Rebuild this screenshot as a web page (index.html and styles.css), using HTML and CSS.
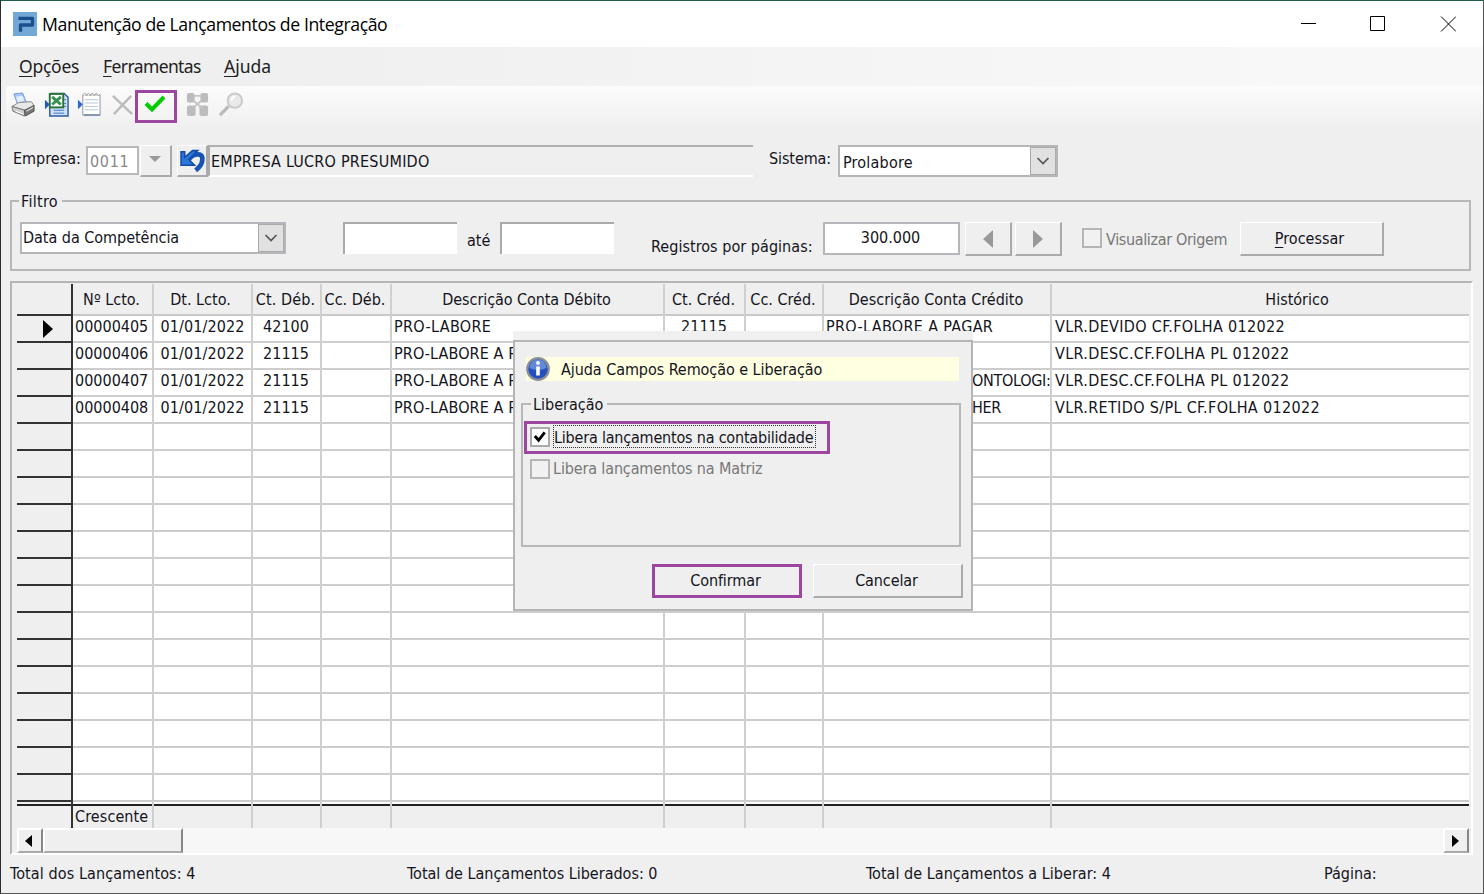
FILE: index.html
```html
<!DOCTYPE html>
<html lang="pt-BR">
<head>
<meta charset="utf-8">
<title>Manutenção de Lançamentos de Integração</title>
<link rel="stylesheet" href="styles.css">
</head>
<body>
<div class="window">
  <header class="titlebar">
    <svg class="logo" viewBox="0 0 24 24"><rect width="24" height="24" fill="#72a8d6"/><path d="M5.500 6.300H19.500v6.700H7.500V19.700" fill="none" stroke="#17508c" stroke-width="3.300" stroke-linejoin="round"/></svg>
    <h1 class="title">Manutenção de Lançamentos de Integração</h1>
    <svg class="controls" viewBox="0 0 156 16" fill="none" stroke="#000"><path d="M1 7.500h15M70.500 .5h14v14h-14z"/><path d="M141 .5l15 15M156 .5l-15 15"/></svg>
  </header>
  <nav class="menu"><span class="m1"><u>O</u>pções</span><span class="m2"><u>F</u>erramentas</span><span class="m3"><u>A</u>juda</span></nav>
  <div class="toolbar">
    <svg class="ico" viewBox="0 0 26 26"><path d="M3 2l9-1 4 10-9 2z" fill="#a9c8f5" stroke="#6f97d8"/><path d="M5 5l7-1 2 5-7 2z" fill="#e3eeff"/><path d="M1 15l7-4 13-1 3 4-9 5z" fill="#e8e8e8" stroke="#888"/><path d="M1 15l13 4v6L2 20z" fill="#cfcfcf" stroke="#777"/><path d="M14 19l10-5v6l-9 5z" fill="#777" stroke="#555"/><path d="M5 20l8 3M16 20l7-4" stroke="#fff"/></svg>
    <svg class="ico" viewBox="0 0 26 26"><path d="M8 1.500h13l4 4V25H6V15z" fill="#cfe0fa" stroke="#315b9c" stroke-width="1.500"/><path d="M10 19h11M10 22h11M21 8h2M21 12h2M21 15h2" stroke="#4272b8"/><rect x="6" y="2" width="14" height="14" fill="#fff" stroke="#28733a" stroke-width="2"/><path d="M8.500 5l9 8M17.500 5l-9 8" stroke="#33934a" stroke-width="3"/><path d="M1 8l5 5-5 5z" fill="#2458b3"/></svg>
    <svg class="ico" viewBox="0 0 26 26"><path d="M6 3h18v21H6z" fill="#fff" stroke="#8d949d"/><path d="M6 3l2-2 2 3 2-3 2 3 2-3 2 3 2-3 2 3 2-2" fill="#fff" stroke="#aaa"/><path d="M8 8h14M8 11.500h14M8 15h14M8 18.500h14" stroke="#b6c6da"/><path d="M7 24h17" stroke="#8395ac" stroke-width="2"/><path d="M1 8l5 5-5 5z" fill="#2e69c4"/></svg>
    <svg class="ico" viewBox="0 0 26 26"><path d="M3 4l20 19M22 4L4 23" stroke="#bcbcbc" stroke-width="2.500"/></svg>
    <span class="marked"><svg viewBox="0 0 22 18"><path d="M2 8.500l6 6L20 2" fill="none" stroke="#0c0" stroke-width="4"/></svg></span>
    <svg class="ico bin" viewBox="0 0 26 26" fill="#bcbcbc"><rect x="2" y="1" width="8" height="10" rx="2"/><rect x="16" y="1" width="8" height="10" rx="2"/><rect x="2" y="14" width="9" height="11" rx="2"/><rect x="15" y="14" width="9" height="11" rx="2"/><path d="M9 4h8M9 9l8 7M17 9l-8 7" stroke="#c4c4c4" stroke-width="2"/></svg>
    <svg class="ico" viewBox="0 0 26 26"><path d="M2 24l9-9" stroke="#bbb" stroke-width="3.500"/><circle cx="17.500" cy="9" r="7.500" fill="#e9e9e9" stroke="#cacaca" stroke-width="2"/><path d="M14 9q0-4 4-4" fill="none" stroke="#fff" stroke-width="2"/></svg>
  </div>

  <section class="company">
    <label class="t-emp">Empresa:</label>
    <span class="code">0011</span>
    <span class="btn drop"><i class="tri down"></i></span>
    <span class="btn undo"><svg viewBox="0 0 26 24"><path d="M9 12c3-6 13.500-9 13.500-1.500 0 5-2.500 8-6.500 11" fill="none" stroke="#1654b3" stroke-width="4.500"/><path d="M2 3.500h3.500V9L13 2.500h5L9.500 11l5.500 5.500H2z" fill="#2b76da" stroke="#134ca5" stroke-width="1.500"/></svg></span>
    <span class="name"><span class="t-name">EMPRESA LUCRO PRESUMIDO</span></span>
    <label class="t-sis">Sistema:</label>
    <span class="combo sys"><span class="t-pro">Prolabore</span><b><svg viewBox="0 0 14 8"><path d="M1.500 1l5.500 5.500L12.500 1"/></svg></b></span>
  </section>

  <section class="group filter">
    <span class="legend t-fil">Filtro</span>
    <span class="combo kind"><span class="t-data">Data da Competência</span><b><svg viewBox="0 0 14 8"><path d="M1.500 1l5.500 5.500L12.500 1"/></svg></b></span>
    <span class="date"></span><label class="until">até</label><span class="date second"></span>
    <label class="t-reg">Registros por páginas:</label>
    <span class="count">300.000</span>
    <span class="btn page"><i class="tri left"></i></span><span class="btn page"><i class="tri right"></i></span>
    <span class="check off origin"></span><label class="t-vis">Visualizar Origem</label>
    <span class="btn process"><span><u>P</u>rocessar</span></span>
  </section>

  <section class="gridbox">
    <div class="columns">
      <div class="col sel"><div class="head"></div><div class="rows"><div><i class="tri cur"></i></div></div><div class="foot"></div></div>
      <div class="col c1"><div class="head">Nº Lcto.</div><div class="rows"><div>00000405</div><div>00000406</div><div>00000407</div><div>00000408</div></div><div class="foot">Crescente</div></div>
      <div class="col c2"><div class="head">Dt. Lcto.</div><div class="rows"><div>01/01/2022</div><div>01/01/2022</div><div>01/01/2022</div><div>01/01/2022</div></div><div class="foot"></div></div>
      <div class="col c3"><div class="head">Ct. Déb.</div><div class="rows"><div>42100</div><div>21115</div><div>21115</div><div>21115</div></div><div class="foot"></div></div>
      <div class="col c4"><div class="head">Cc. Déb.</div><div class="rows"></div><div class="foot"></div></div>
      <div class="col c5"><div class="head">Descrição Conta Débito</div><div class="rows"><div>PRO-LABORE</div><div class="under">PRO-LABORE A P</div><div class="under">PRO-LABORE A P</div><div class="under">PRO-LABORE A P</div></div><div class="foot"></div></div>
      <div class="col c6"><div class="head">Ct. Créd.</div><div class="rows"><div>21115</div></div><div class="foot"></div></div>
      <div class="col c7"><div class="head">Cc. Créd.</div><div class="rows"></div><div class="foot"></div></div>
      <div class="col c8"><div class="head">Descrição Conta Crédito</div><div class="rows"><div>PRO-LABORE A PAGAR</div><div></div><div class="tail">ONTOLOGI:</div><div class="tail">HER</div></div><div class="foot"></div></div>
      <div class="col c9"><div class="head">Histórico</div><div class="rows"><div>VLR.DEVIDO CF.FOLHA 012022</div><div>VLR.DESC.CF.FOLHA PL 012022</div><div>VLR.DESC.CF.FOLHA PL 012022</div><div>VLR.RETIDO S/PL CF.FOLHA 012022</div></div><div class="foot"></div></div>
    </div>
    <div class="scroll"><span class="sb"><i class="tri sl"></i></span><span class="sb thumb"></span><span class="sb end"><i class="tri sr"></i></span></div>
  </section>

  <footer class="status"><span class="s1">Total dos Lançamentos: 4</span><span class="s2">Total de Lançamentos Liberados: 0</span><span class="s3">Total de Lançamentos a Liberar: 4</span><span class="s4">Página:</span></footer>

  <div class="dialog">
    <div class="panel">
      <div class="help"><svg viewBox="0 0 24 24"><circle cx="12" cy="12" r="10.800" fill="#2450bd" stroke="#8d8f98" stroke-width="2.200"/><path d="M3.500 11a8.500 8.500 0 0 1 17 0q-8 4-17 0z" fill="#7fa3e6" opacity=".7"/><path d="M12 9.500v9" fill="none" stroke="#fff" stroke-width="3.600"/><circle cx="12" cy="6" r="1.900" fill="#fff"/></svg><span class="t-help">Ajuda Campos Remoção e Liberação</span></div>
      <div class="group release">
        <span class="legend t-lib">Liberação</span>
        <div class="opt marked"><span class="check"><svg viewBox="0 0 17 17"><path d="M3 7.500l4 4.500 6.500-8.500" fill="none" stroke="#000" stroke-width="3"/></svg></span><span class="focus"><span class="t-cont">Libera lançamentos na contabilidade</span></span></div>
        <div class="opt dim"><span class="check off"></span><span class="t-mat">Libera lançamentos na Matriz</span></div>
      </div>
      <div class="actions"><span class="ok"><span class="t-conf">Confirmar</span></span><span class="btn cancel"><span class="t-canc">Cancelar</span></span></div>
    </div>
  </div>
</div>
</body>
</html>
```
FILE: styles.css
```css
* { box-sizing: border-box; }
body { margin: 0; }
.window {
  position: relative;
  width: 1484px; height: 894px;
  border: 1px solid #555; border-top-color: #1f5c4d; border-left-color: #252c38;
  background: #efefef; color: #14141c;
  font: 16px/20px "DejaVu Sans Condensed", "DejaVu Sans", sans-serif;
  font-stretch: condensed;
  display: flex; flex-direction: column; overflow: hidden; white-space: nowrap;
}
svg { display: block; flex: none; }
label, .btn, .combo, .check { flex: none; }
u { text-decoration-thickness: 1px; text-underline-offset: 3px; }

.titlebar { height: 46px; flex: none; background: #fff; display: flex; align-items: center; padding: 0 27px 1px 12px; }
.logo { width: 24px; height: 24px; }
.title { margin: 1px 0 0 5px; flex: 1; font: 400 17.700px/24px "Open Sans", sans-serif; letter-spacing: -.42px; color: #000; }
.controls { width: 156px; height: 16px; }

.menu { height: 39px; flex: none; display: flex; align-items: center; padding: 0 0 2px 18px; background: linear-gradient(90deg, #efefef 200px, #f8f8f8 1300px); font: 17.500px/24px "Noto Sans", sans-serif; color: #222; }
.m1 { width: 84px; letter-spacing: -.25px; }
.m2 { width: 121px; letter-spacing: -.6px; }

.toolbar { height: 42px; flex: none; margin-left: 5px; border-radius: 4px 0 0 4px; background: linear-gradient(#fcfcfc, #efefef); display: flex; align-items: flex-start; padding: 6px 0 0 5px; }
.ico { width: 25px; height: 25px; margin: 0 8px 0 0; }
.toolbar .ico:nth-child(4) { margin-right: 0; }
.marked { border: 3px solid #9c469f; }
.toolbar .marked { width: 42px; height: 33px; margin: -2px 8px 0 0; padding: 2px 0 0 6px; }
.toolbar .marked svg { width: 22px; height: 18px; }

.company { height: 72px; flex: none; display: flex; align-items: flex-start; padding: 17px 0 0 12px; }
.company label { margin-top: 4px; }
.t-emp { width: 73px; }
.code { width: 53px; height: 29px; border: 2px solid #b8b8bd; background: #fff; color: #888; padding: 4px 2px; margin-top: 1px; letter-spacing: .7px; }
.btn { border: 2px solid; border-color: #fff #aaa #aaa #fff; border-width: 1px 2px 2px 1px; display: flex; align-items: center; justify-content: center; }
.drop { width: 32px; height: 32px; margin-left: 1px; padding: 0 2px 3px 0; }
.undo { width: 31px; height: 32px; margin-left: 5px; }
.undo svg { width: 27px; height: 25px; }
.name { width: 545px; height: 32px; border-top: 2px solid #b0b0b0; border-bottom: 2px solid #fff; border-left: 2px solid #aaa; padding: 5px 0 0 1px; letter-spacing: .22px; }
.t-sis { margin-left: 16px; width: 69px; letter-spacing: -.1px; }
.combo { height: 32px; border: 2px solid #b5b5ba; background: #fff; display: flex; justify-content: space-between; padding-left: 3px; line-height: 28px; }
.combo b { width: 26px; background: #e1e1e1; border: 1px solid #aaa; display: flex; align-items: center; justify-content: center; }
.combo svg { width: 14px; height: 8px; fill: none; stroke: #555; stroke-width: 1.700; }
.sys { width: 220px; line-height: 31px; letter-spacing: .2px; }

.group { border: 2px solid #b8b8b8; position: relative; }
.legend { position: absolute; top: -11px; left: 8px; background: #efefef; padding: 0 4px 0 2px; line-height: 20px; }
.filter { height: 71px; flex: none; margin: 0 12px 0 9px; display: flex; align-items: flex-start; padding: 20px 0 0 8px; }
.filter .legend { top: -10px; left: 7px; letter-spacing: .3px; }
.kind { width: 266px; padding-left: 1px; letter-spacing: -.03px; }
.date { width: 114px; height: 32px; background: #fff; border-top: 2px solid #aaa; border-left: 2px solid #aaa; margin-left: 57px; }
.until { margin: 9px 0 0 10px; width: 24px; }
.second { margin-left: 9px; }
.t-reg { margin: 15px 0 0 37px; width: 163px; letter-spacing: .04px; }
.count { width: 137px; height: 33px; margin: 0 5px 0 9px; border: 2px solid #b5b5ba; background: #fff; text-align: center; line-height: 28px; padding-right: 2px; }
.page { width: 47px; height: 34px; margin-right: 3px; }
.check { width: 20px; height: 20px; border: 2px solid #aaa; background: #fff; }
.check.off { background: #f1f1f1; border-color: #b5b5b5; }
.origin { margin: 6px 0 0 17px; }
.t-vis { margin: 8px 0 0 4px; width: 121px; color: #777; letter-spacing: -.35px; }
.process { width: 144px; height: 34px; margin-left: 13px; padding-right: 4px; }
.process span { padding-top: 1px; }

.tri { width: 0; height: 0; border: 0 solid transparent; display: block; }
.down { border-width: 6px 6px 0; border-top-color: #999; }
.left { border-width: 9px 10px 9px 0; border-right-color: #999; }
.right { border-width: 9px 0 9px 10px; border-left-color: #999; }
.cur { border-width: 9px 0 9px 10px; border-left-color: #000; margin: 3px 0 0 22px; }
.sl { border-width: 6px 7px 6px 0; border-right-color: #000; margin-right: 4px; }
.sr { border-width: 6px 0 6px 7px; border-left-color: #000; margin-right: 2px; }

.gridbox { width: 1463px; height: 574px; flex: none; margin: 10px 0 0 9px; border: 2px solid; border-color: #b5b5b5 #fff #fff #b5b5b5; padding: 1px 1px 0 5px; }
.columns { height: 544px; display: grid; grid-template-columns: 56px 81px 99px 69px 70px 273px 81px 78px 228px 417px; margin-right: 1px; }
.col { border-right: 2px solid #cfcfcf; min-width: 0; }
.col:last-child { border-right: 0; }
.head { height: 30px; line-height: 31px; text-align: center; padding-right: 2px; }
.rows { height: 492px; padding-top: 1px; border-top: 2px solid #c8c8c8; background: repeating-linear-gradient(#fff 0 25px, #cdcdcd 25px 27px); border-bottom: 2px solid #222; }
.rows div { height: 27px; line-height: 19px; padding-left: 2px; overflow: hidden; }
.foot { height: 22px; line-height: 22px; padding-left: 2px; letter-spacing: .1px; }
.col.sel { border-right: 2px solid #333; }
.sel .rows { border-top-color: #333; background: repeating-linear-gradient(#efefef 0 25px, #333 25px 27px); }
.sel .rows div { padding-left: 4px; }
.c2 .rows, .c3 .rows, .c6 .rows { text-align: center; padding-right: 3px; }
.c2 .rows { padding-right: 2px; letter-spacing: .12px; }
.c2 .head { padding-right: 4px; }
.c3 .head { letter-spacing: .1px; }
.c5 .head { letter-spacing: -.07px; }
.c5 .rows, .c8 .rows, .c9 .rows { letter-spacing: .34px; }
.c5 .rows .under { letter-spacing: .1px; }
.c8 .rows .tail { padding-left: 148px; letter-spacing: -.3px; }
.c9 .rows div { padding-left: 3px; }
.c9 .head { padding: 0 0 0 73px; }

.scroll { height: 25px; display: flex; background: #f7f7f7; margin-right: 1px; }
.sb { width: 26px; background: #efefef; border: 2px solid; border-color: #fff #888 #aaa #fff; display: flex; align-items: center; justify-content: center; }
.thumb { width: 140px; }
.end { margin-left: auto; }

.status { height: 38px; flex: none; display: flex; padding: 9px 0 0 9px; }
.s1 { width: 397px; letter-spacing: .1px; } .s2 { width: 459px; } .s3 { width: 458px; letter-spacing: .03px; }

.dialog { position: absolute; left: 512px; top: 330px; width: 460px; height: 280px; background: #f0f0f0; padding-top: 9px; }
.panel { height: 271px; border: 2px solid #b5b5b5; background: #efefef; padding: 15px 8px 0 6px; }
.help { height: 24px; margin: 0 4px 0 5px; background: #ffffe1; display: flex; align-items: center; }
.help svg { width: 24px; height: 24px; }
.t-help { margin: 2px 0 0 11px; letter-spacing: -.06px; }
.release { width: 440px; height: 144px; margin-top: 22px; padding: 16px 0 0 1px; }
.release .legend { top: -10px; }
.opt { display: flex; align-items: center; }
.opt.marked { width: 306px; height: 33px; padding: 0 0 2px 3px; }
.dim { margin-top: 4px; padding-left: 6px; color: #777; letter-spacing: -.14px; }
.dim .t-mat { margin: 1px 0 0 3px; }
.focus { border: 1px dotted #333; width: 263px; height: 23px; margin-left: 3px; line-height: 23px; letter-spacing: -.2px; }
.actions { display: flex; padding-left: 131px; margin-top: 17px; }
.ok { flex: none; width: 150px; height: 34px; border: 3px solid #9c469f; margin-right: 11px; text-align: center; line-height: 28px; padding-right: 3px; letter-spacing: -.1px; }
.cancel { width: 150px; height: 34px; padding-right: 2px; letter-spacing: -.1px; }
.cancel span { padding-top: 1px; }
```
